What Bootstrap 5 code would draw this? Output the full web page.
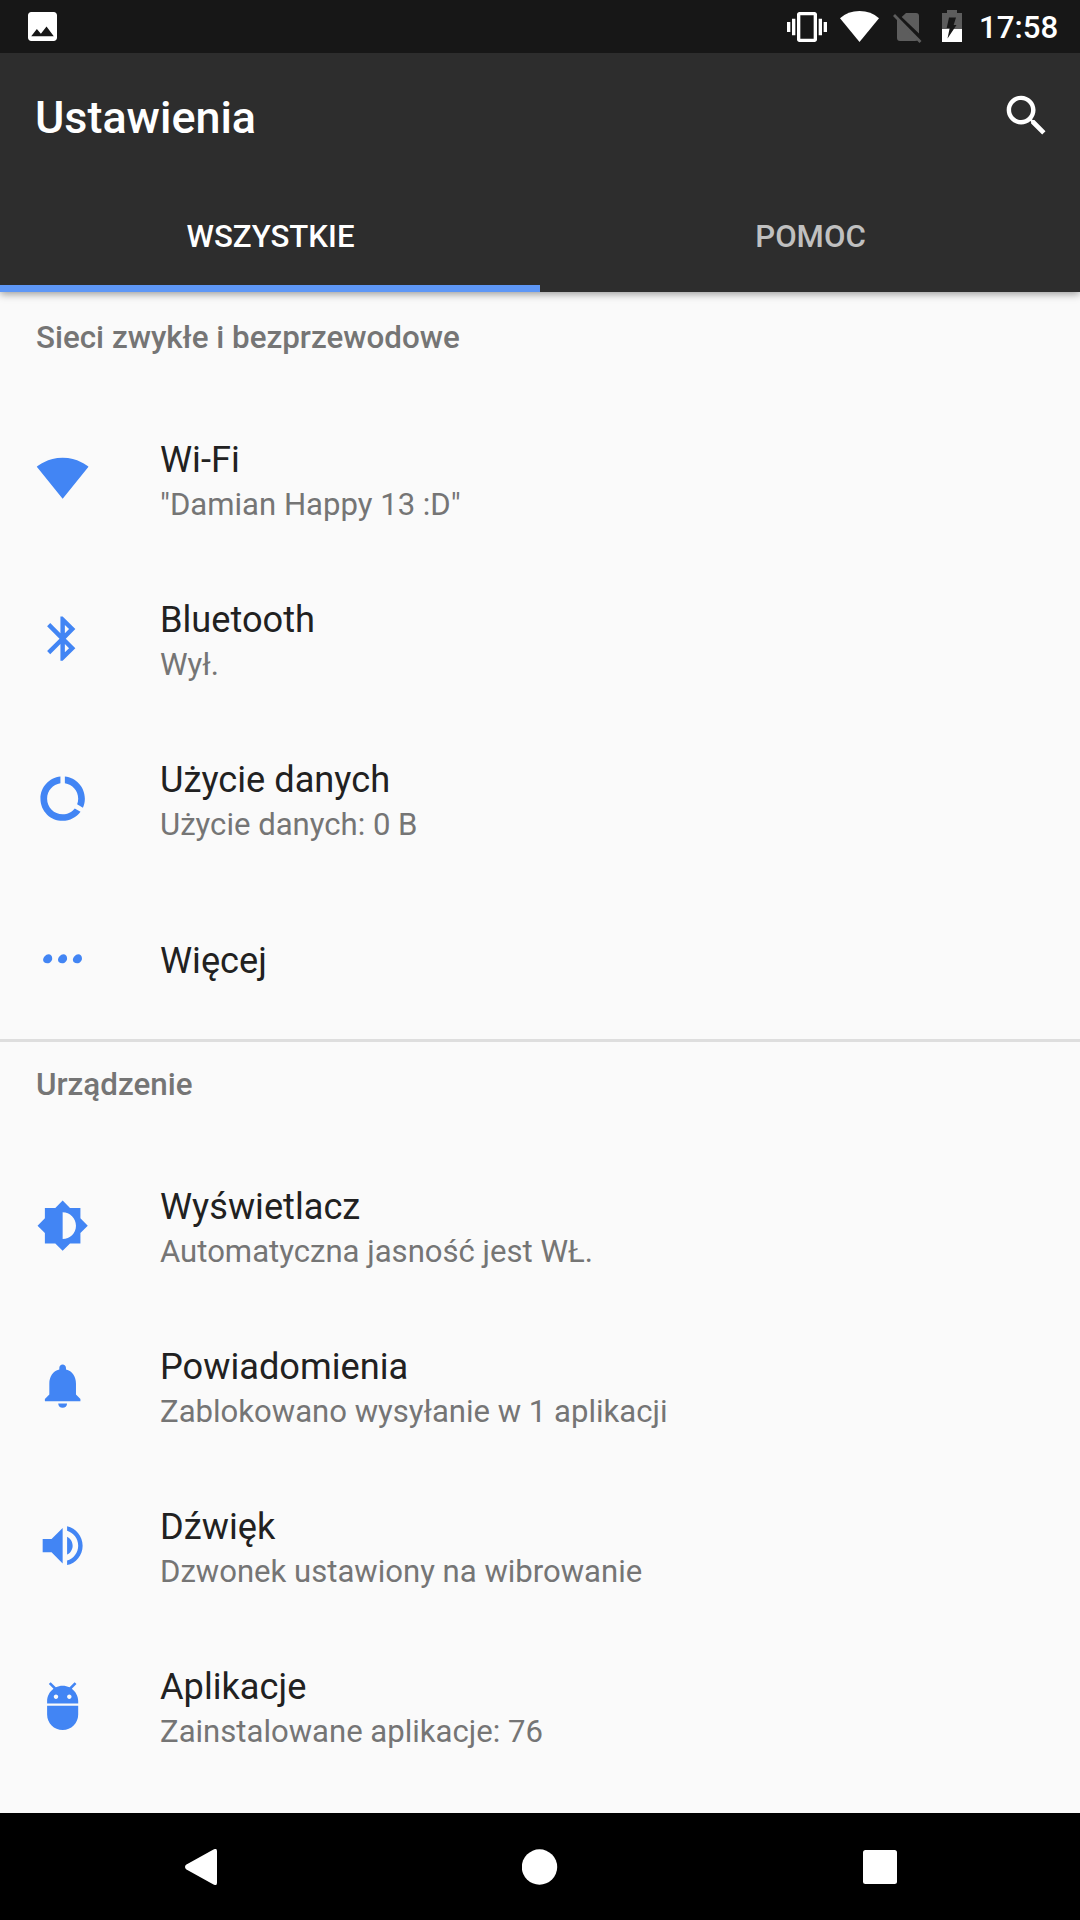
<!DOCTYPE html>
<html lang="pl">
<head>
<meta charset="utf-8">
<meta name="viewport" content="width=device-width, initial-scale=1">
<title>Ustawienia</title>
<link href="https://cdn.jsdelivr.net/npm/bootstrap@5.3.0/dist/css/bootstrap.min.css" rel="stylesheet">
<style>
  body { font-family: Roboto, sans-serif; background: #fafafa; color: #212121; }
  .screen { width: 1080px; height: 1920px; }
  .status-bar { height: 53px; background: #171717; padding: 0 22px 0 28px; }
  .status-bar svg, .sys-nav svg, .item-icon svg, .app-bar svg { display: block; }
  .clock { font-size: 31.2px; font-weight: 500; line-height: 53px; margin-left: 17px; padding-top: 1px; width: 79px; }
  .top-area { background: #2d2d2d; box-shadow: 0 2px 8px rgba(0,0,0,.4); z-index: 1; }
  .app-bar { height: 125px; padding: 0 27px 0 35px; }
  .app-title { font-size: 44.9px; font-weight: 500; line-height: 52px; padding-top: 5px; }
  .tab-strip { height: 114px; }
  .tab-strip .nav-link { color: #c0c0c0; font-size: 31.2px; font-weight: 500; line-height: 36px; border-radius: 0; padding: 41px 0 30px 1px; border-bottom: 7px solid transparent; }
  .tab-strip .nav-link.active { color: #fff; border-bottom-color: #5e97f6; }
  .group-one { height: 747px; }
  .group-head { height: 106.500px; padding: 28px 36px 0; font-size: 31.350px; font-weight: 500; line-height: 36px; color: #757575; }
  .group-two { height: 747px; border-top: 3px solid #dedede; }
  .group-two .group-head { height: 104px; padding-top: 25px; }
  .list-group-item.setting { height: 160px; padding: 0 36px; background: transparent; color: inherit; }
  .item-icon { width: 124px; color: #4285f4; }
  .item-text { padding-top: 4px; }
  .item-title { font-size: 36.2px; line-height: 42px; }
  .item-note { font-size: 31.1px; line-height: 36px; margin-top: 6px; color: #757575; }
  .sys-nav { height: 107px; background: #000; padding: 0 183px 0 185px; }
</style>
</head>
<body>
<div class="screen d-flex flex-column overflow-hidden">
  <header class="top-area position-relative flex-shrink-0 text-white">
    <div class="status-bar d-flex align-items-center">
      <svg class="me-auto" width="29" height="29" viewBox="3 3 18 18" fill="#fff"><path d="M21 19V5c0-1.1-.9-2-2-2H5c-1.1 0-2 .9-2 2v14c0 1.1.9 2 2 2h14c1.1 0 2-.9 2-2zM8.500 13.500l2.500 3.010L14.500 12l4.500 6H5l3.500-4.500z"/></svg>
      <svg width="40" height="40" viewBox="0 0 24 24" fill="#fff"><path d="M0 15h2V9H0v6zm3 2h2V7H3v10zm19-8v6h2V9h-2zm-3 8h2V7h-2v10zM16.500 3h-9C6.670 3 6 3.670 6 4.500v15c0 .83.67 1.500 1.500 1.500h9c.83 0 1.500-.67 1.500-1.500v-15c0-.83-.67-1.500-1.500-1.500zM16 19H8V5h8v14z"/></svg>
      <svg width="66" height="53" viewBox="827 0 66 53" fill="#fff"><path d="M859.500 42L879 18.200Q871 11 859.500 11T840 18.200z"/></svg>
      <svg width="49" height="53" viewBox="893 0 49 53"><path d="M906 13H916q3 0 3 3V33.500L901.700 17zM897 18L918 39.500q-.8 1.500-3 1.500H900q-3 0-3-3z" fill="#5d5d5d"/><path d="M894 15L920.500 42" stroke="#5d5d5d" stroke-width="2.800"/></svg>
      <svg width="20" height="53" viewBox="942 0 20 53"><path d="M947 10h10v3h5V29H942V13h5z" fill="#5d5d5d"/><path d="M942 29h20V42H942z" fill="#fff"/><path d="M949 17.500h7l-2.300 7.500h2.800L947.500 38.500l2.200-10.500h-3z" fill="#171717"/></svg>
      <div class="clock">17:58</div>
    </div>
    <div class="app-bar navbar d-flex flex-nowrap align-items-center justify-content-between">
      <div class="app-title">Ustawienia</div>
      <svg width="53.300" height="53.300" viewBox="0 0 24 24" fill="#fff"><path d="M15.500 14h-.79l-.28-.27C15.410 12.590 16 11.110 16 9.500 16 5.910 13.090 3 9.500 3S3 5.910 3 9.500 5.910 16 9.500 16c1.610 0 3.090-.59 4.230-1.570l.27.28v.79l5 4.990L20.490 19l-4.990-5zm-6 0C7.010 14 5 11.990 5 9.500S7.010 5 9.500 5 14 7.010 14 9.500 11.990 14 9.500 14z"/></svg>
    </div>
    <nav class="tab-strip nav nav-justified flex-nowrap">
      <a class="nav-link active w-50" href="#">WSZYSTKIE</a>
      <a class="nav-link w-50" href="#">POMOC</a>
    </nav>
  </header>

  <main class="flex-grow-1 overflow-hidden">
    <section class="group-one">
      <div class="group-head">Sieci zwykłe i bezprzewodowe</div>
      <div class="list-group list-group-flush">
        <div class="list-group-item setting border-0 d-flex align-items-center">
          <div class="item-icon"><svg width="53.300" height="53.300" viewBox="0 0.4 24 24" fill="currentColor"><path d="M12.010 21.490L23.640 7c-.45-.34-4.930-4-11.640-4C5.280 3 .81 6.660.36 7l11.630 14.490.01.010.01-.010z"/></svg></div>
          <div class="item-text"><div class="item-title">Wi-Fi</div><div class="item-note">"Damian Happy 13 :D"</div></div>
        </div>
        <div class="list-group-item setting border-0 d-flex align-items-center">
          <div class="item-icon"><svg width="53.300" height="53.300" viewBox="0 0 24 24" fill="currentColor"><path d="M17.710 7.710L12 2h-1v7.590L6.410 5 5 6.410 10.590 12 5 17.590 6.410 19 11 14.410V22h1l5.710-5.710-4.300-4.290 4.300-4.290zM13 5.830l1.880 1.880L13 9.590V5.830zm1.880 10.460L13 18.170v-3.760l1.880 1.880z"/></svg></div>
          <div class="item-text"><div class="item-title">Bluetooth</div><div class="item-note">Wył.</div></div>
        </div>
        <div class="list-group-item setting border-0 d-flex align-items-center">
          <div class="item-icon"><svg width="53.300" height="53.300" viewBox="0 0 24 24" fill="currentColor"><path d="M13 2.050v3.030c3.390.49 6 3.390 6 6.920 0 .9-.18 1.750-.48 2.540l2.600 1.530c.56-1.240.88-2.620.88-4.070 0-5.180-3.950-9.450-9-9.950zM12 19c-3.870 0-7-3.130-7-7 0-3.530 2.610-6.430 6-6.920V2.050c-5.060.5-9 4.760-9 9.950 0 5.520 4.470 10 9.990 10 3.310 0 6.240-1.610 8.060-4.090l-2.600-1.530C16.170 17.980 14.210 19 12 19z"/></svg></div>
          <div class="item-text"><div class="item-title">Użycie danych</div><div class="item-note">Użycie danych: 0 B</div></div>
        </div>
        <div class="list-group-item setting border-0 d-flex align-items-center">
          <div class="item-icon"><svg width="53.300" height="53.300" viewBox="0 0 24 24" fill="currentColor"><path id="dot" d="M5.600 10c1.100 0 1.700.8 1.700 1.900S6.300 14.100 5.100 14.100s-1.900-.6-1.900-1.600S4.400 10 5.600 10z"/><use href="#dot" x="6.700"/><use href="#dot" x="13.400"/></svg></div>
          <div class="item-text"><div class="item-title">Więcej</div></div>
        </div>
      </div>
    </section>
    <section class="group-two">
      <div class="group-head">Urządzenie</div>
      <div class="list-group list-group-flush">
        <div class="list-group-item setting border-0 d-flex align-items-center">
          <div class="item-icon"><svg width="53.300" height="53.300" viewBox="0 0 24 24" fill="currentColor"><path d="M20 15.310L23.310 12 20 8.690V4h-4.690L12 .69 8.690 4H4v4.690L.69 12 4 15.310V20h4.690L12 23.310 15.310 20H20v-4.690zM12 18V6c3.310 0 6 2.690 6 6s-2.690 6-6 6z"/></svg></div>
          <div class="item-text"><div class="item-title">Wyświetlacz</div><div class="item-note">Automatyczna jasność jest WŁ.</div></div>
        </div>
        <div class="list-group-item setting border-0 d-flex align-items-center">
          <div class="item-icon"><svg width="53.300" height="53.300" viewBox="0 0 24 24" fill="currentColor"><path d="M12 22c1.100 0 2-.9 2-2h-4c0 1.100.89 2 2 2zm6-6v-5c0-3.070-1.640-5.640-4.500-6.320V4c0-.83-.67-1.500-1.500-1.500s-1.500.67-1.500 1.500v.68C7.630 5.360 6 7.920 6 11v5l-2 2v1h16v-1l-2-2z"/></svg></div>
          <div class="item-text"><div class="item-title">Powiadomienia</div><div class="item-note">Zablokowano wysyłanie w 1 aplikacji</div></div>
        </div>
        <div class="list-group-item setting border-0 d-flex align-items-center">
          <div class="item-icon"><svg width="53.300" height="53.300" viewBox="0 0 24 24" fill="currentColor"><path d="M3 9v6h4l5 5V4L7 9H3zm13.500 3c0-1.770-1.020-3.290-2.500-4.030v8.050c1.480-.73 2.500-2.250 2.500-4.020zM14 3.230v2.060c2.890.86 5 3.540 5 6.710s-2.110 5.850-5 6.710v2.060c4.010-.91 7-4.490 7-8.770s-2.990-7.860-7-8.770z"/></svg></div>
          <div class="item-text"><div class="item-title">Dźwięk</div><div class="item-note">Dzwonek ustawiony na wibrowanie</div></div>
        </div>
        <div class="list-group-item setting border-0 d-flex align-items-center">
          <div class="item-icon"><svg width="53.300" height="53.300" viewBox="0 0 24 24" fill="currentColor"><path d="M5 16c0 3.870 3.130 7 7 7s7-3.130 7-7v-4H5v4zM16.120 4.370l2.100-2.100-.82-.83-2.300 2.310C14.160 3.280 13.120 3 12 3s-2.160.28-3.090.75L6.600 1.440l-.82.83 2.100 2.100C6.140 5.640 5 7.680 5 10v1h14v-1c0-2.320-1.140-4.360-2.880-5.630zM9 9c-.55 0-1-.45-1-1s.45-1 1-1 1 .45 1 1-.45 1-1 1zm6 0c-.55 0-1-.45-1-1s.45-1 1-1 1 .45 1 1-.45 1-1 1z"/></svg></div>
          <div class="item-text"><div class="item-title">Aplikacje</div><div class="item-note">Zainstalowane aplikacje: 76</div></div>
        </div>
      </div>
    </section>
  </main>

  <footer class="sys-nav flex-shrink-0 d-flex align-items-center justify-content-between">
    <svg width="32" height="36" viewBox="0 0 32 36" fill="#fff"><path d="M28.500.6Q32-1.500 32 2.500V33.500Q32 37.500 28.500 35.400L1 20.200Q-1 18 1 15.800z"/></svg>
    <svg width="36" height="36" viewBox="0 0 36 36" fill="#fff"><circle cx="17.500" cy="18" r="17.700"/></svg>
    <svg width="34" height="34" viewBox="0 0 34 34" fill="#fff"><rect width="34" height="34" rx="2.500"/></svg>
  </footer>
</div>
<script src="https://cdn.jsdelivr.net/npm/bootstrap@5.3.0/dist/js/bootstrap.bundle.min.js"></script>
</body>
</html>
